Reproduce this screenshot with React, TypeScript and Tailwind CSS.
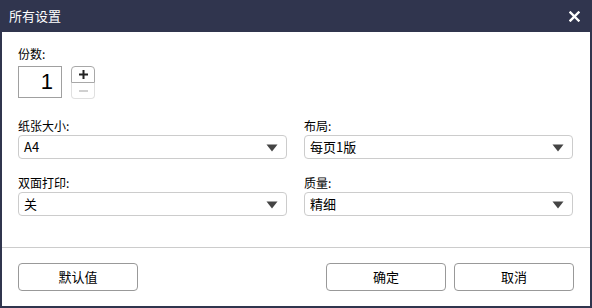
import React from "react";

const font = { fontFamily: '"Noto Sans CJK SC", "Noto Sans", sans-serif' };

function Select({ value }: { value: string }) {
  return (
    <div className="h-[24px] border border-[#cccccc] rounded-[4px] flex items-center justify-between pl-[5px] pr-[8px] bg-white">
      <span className="text-[13px] leading-[16px] text-black">{value}</span>
      <svg width="12" height="8" viewBox="0 0 12 8" className="mt-[1px]">
        <path d="M0.5 0.5 H11.5 L6 7.5 Z" fill="#444444" />
      </svg>
    </div>
  );
}

function Field({ label, value }: { label: string; value: string }) {
  return (
    <div className="flex flex-col">
      <div className="text-[12px] leading-[16px] text-black mb-[1px]">{label}</div>
      <Select value={value} />
    </div>
  );
}

export default function App() {
  return (
    <div className="w-[592px] h-[308px] bg-[#30354e] flex flex-col px-[2px] pb-[2px]" style={font}>
      <div className="h-[32px] shrink-0 flex items-center justify-between pl-[7px] pr-[10px]">
        <span className="text-white text-[13px] leading-[16px]">所有设置</span>
        <svg width="11" height="11" viewBox="0 0 11 11">
          <path d="M1.5 1.5 L9.5 9.5 M9.5 1.5 L1.5 9.5" stroke="#ffffff" strokeWidth="2.4" strokeLinecap="square" />
        </svg>
      </div>
      <div className="flex-1 bg-white flex flex-col">
        <div className="pl-[16px] pr-[17px] pt-[14px]">
          <div className="text-[12px] leading-[16px] text-black mb-[4px]">份数:</div>
          <div className="flex items-start gap-[9px]">
            <div className="w-[44px] h-[32px] border border-[#a0a0a0] flex items-center justify-end pr-[8px]">
              <span className="text-[22px] leading-[24px] text-black" style={{ fontFamily: '"Liberation Sans", Arial, sans-serif' }}>1</span>
            </div>
            <div className="flex flex-col w-[24px]">
              <div className="h-[17px] border border-[#a8a8a8] rounded-t-[4px] flex items-center justify-center">
                <svg width="9" height="9" viewBox="0 0 9 9">
                  <path d="M4.5 0 V9 M0 4.5 H9" stroke="#222222" strokeWidth="2" />
                </svg>
              </div>
              <div className="h-[16px] border border-t-0 border-[#e0e0e0] rounded-b-[4px] flex items-center justify-center">
                <svg width="9" height="2" viewBox="0 0 9 2">
                  <path d="M0 1 H9" stroke="#d0d0d0" strokeWidth="2" />
                </svg>
              </div>
            </div>
          </div>
          <div className="grid grid-cols-2 gap-x-[17px] gap-y-[16px] mt-[19px]">
            <Field label="纸张大小:" value="A4" />
            <Field label="布局:" value="每页1版" />
            <Field label="双面打印:" value="关" />
            <Field label="质量:" value="精细" />
          </div>
        </div>
        <div className="mt-[31px] h-px bg-[#cccccc]" />
        <div className="flex items-center pl-[16px] pr-[16px] pt-[15px]">
          <button className="w-[120px] h-[28px] border border-[#999999] rounded-[4px] text-[13px] text-black bg-white">默认值</button>
          <div className="flex-1" />
          <button className="w-[120px] h-[28px] border border-[#999999] rounded-[4px] text-[13px] text-black bg-white">确定</button>
          <button className="w-[120px] h-[28px] border border-[#999999] rounded-[4px] text-[13px] text-black bg-white ml-[8px]">取消</button>
        </div>
      </div>
    </div>
  );
}
